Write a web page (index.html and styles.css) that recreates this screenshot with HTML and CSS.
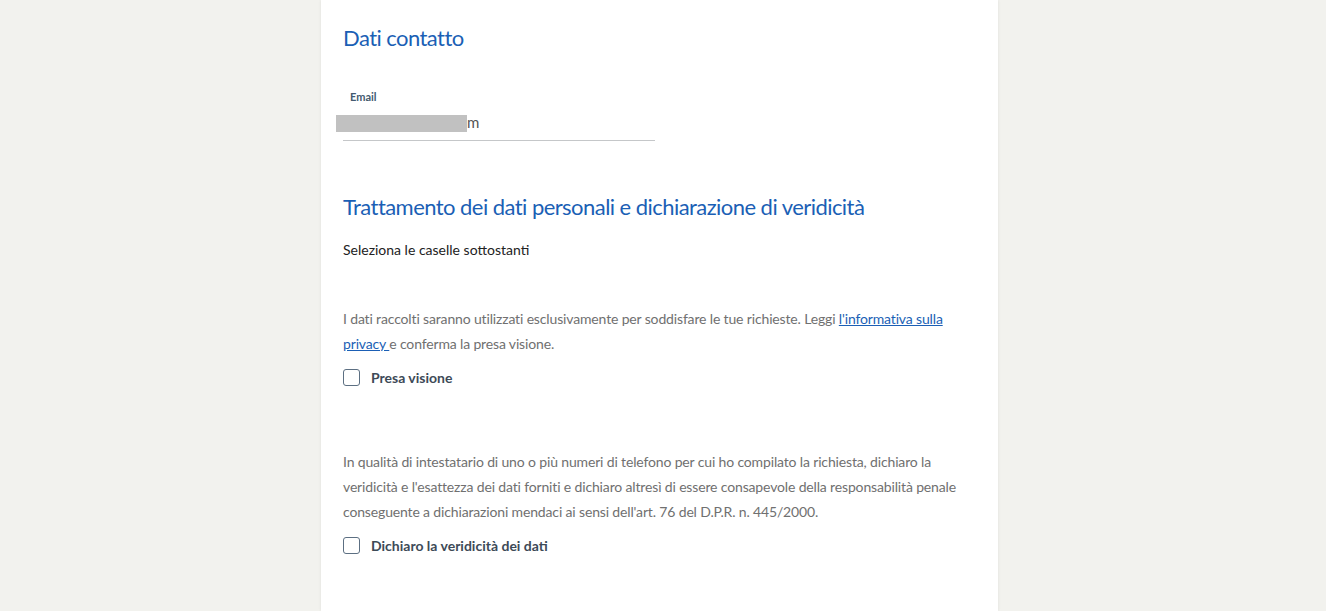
FILE: index.html
```html
<!DOCTYPE html>
<html lang="it">
<head>
    <meta charset="UTF-8">
    <meta name="viewport" content="width=device-width, initial-scale=1.0">
    <title>Dati contatto</title>
    <link rel="stylesheet" href="styles.css">
</head>
<body>
    <div class="page">
        <div class="card">
            <h3 class="section-title">Dati contatto</h3>
            <div class="field">
                <label for="email">Email</label>
                <div class="field-value" id="email">
                    <span class="redact"></span>
                    <span class="value-text">m</span>
                </div>
            </div>

            <h3 class="section-title second">Trattamento dei dati personali e dichiarazione di veridicità</h3>
            <p class="hint">Seleziona le caselle sottostanti</p>

            <div class="consent">
                <p class="consent-text">I dati raccolti saranno utilizzati esclusivamente per soddisfare le tue richieste. Leggi <a href="#">l'informativa sulla privacy </a>e conferma la presa visione.</p>
                <label class="check">
                    <input type="checkbox">
                    <span class="box"></span>
                    <span>Presa visione</span>
                </label>
            </div>

            <div class="consent">
                <p class="consent-text">In qualità di intestatario di uno o più numeri di telefono per cui ho compilato la richiesta, dichiaro la veridicità e l'esattezza dei dati forniti e dichiaro altresì di essere consapevole della responsabilità penale conseguente a dichiarazioni mendaci ai sensi dell'art. 76 del D.P.R. n. 445/2000.</p>
                <label class="check">
                    <input type="checkbox">
                    <span class="box"></span>
                    <span>Dichiaro la veridicità dei dati</span>
                </label>
            </div>
        </div>
    </div>
</body>
</html>
```

FILE: styles.css
```css
html, body {
    margin: 0;
    height: 100%;
}
body {
    background-color: #f2f2ee;
    font-family: Lato, "Open Sans", sans-serif;
    color: #333;
    overflow: hidden;
}
.page {
    display: flex;
    justify-content: center;
    padding-right: 7px;
    height: 100%;
}
.card {
    width: 677px;
    box-sizing: border-box;
    background-color: #fff;
    padding: 23px 22px 0 22px;
    box-shadow: 0 0 3px rgba(0, 0, 0, 0.08);
}
.section-title {
    margin: 0;
    font-size: 22px;
    font-weight: 400;
    line-height: 30px;
    color: #1b5fb5;
    letter-spacing: -0.55px;
}
.section-title.second {
    margin-top: 51px;
}
.field {
    margin-top: 37px;
    width: 312px;
}
.field label {
    display: block;
    font-size: 11px;
    font-weight: 700;
    color: #435a70;
    margin-left: 7px;
    line-height: 14px;
}
.field-value {
    display: flex;
    align-items: center;
    height: 36px;
    border-bottom: 1px solid #c5c7c9;
    font-size: 15px;
    color: #555;
}
.redact {
    width: 131px;
    height: 17px;
    margin-left: -7px;
    margin-top: 2px;
    background-color: #c1c1c1;
}
.value-text {
    line-height: 17px;
}
.hint {
    margin: 19px 0 0;
    font-size: 14px;
    line-height: 18px;
    color: #222;
}
.consent {
    margin-top: 47px;
}
.consent + .consent {
    margin-top: 63px;
}
.consent-text {
    margin: 0;
    font-size: 14px;
    line-height: 25px;
    color: #707070;
    letter-spacing: -0.15px;
}
.consent-text a {
    color: #1b5fb5;
    text-decoration: underline;
}
.check {
    display: flex;
    align-items: center;
    gap: 11px;
    margin-top: 13px;
    font-size: 14px;
    font-weight: 700;
    color: #3d4a57;
    cursor: pointer;
}
.check input {
    display: none;
}
.box {
    width: 17px;
    height: 17px;
    border: 1.5px solid #5c6f82;
    border-radius: 3px;
    box-sizing: border-box;
}
```
